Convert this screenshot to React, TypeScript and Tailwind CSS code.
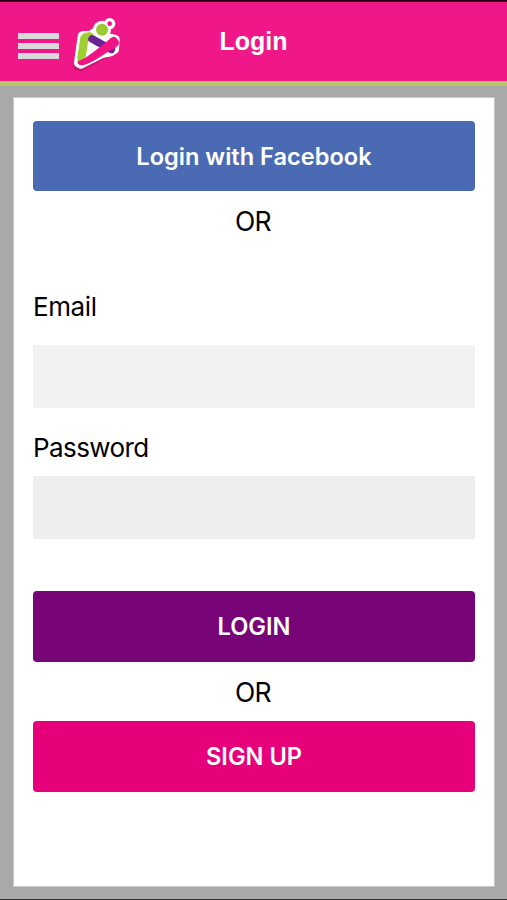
import type { ReactNode } from "react";

function Logo() {
  return (
    <svg viewBox="0 0 180 198" className="h-[66px] w-[60px] shrink-0" fill="none" strokeLinecap="round" strokeLinejoin="round">
      <g transform="translate(-1 6)" opacity="0.4" stroke="#8f1058" fill="#8f1058">
        <path d="M38 160 L50 79 L72 78 L118 88 L144 90 L142 114 L106 130 L46 162 Z" strokeWidth="30" />
      </g>
      <path d="M39 158 L50 79 L74 77 L104 58 L120 84 L146 89 L144 118 L134 124 L108 129 L44 161 Z" fill="#fff" stroke="#fff" strokeWidth="30" />
      <circle cx="108" cy="59" r="27" fill="#fff" />
      <circle cx="131" cy="41" r="17" fill="#fff" />
      <path d="M46 145 L55 86 Q58 79 71 79" stroke="#a0cf32" strokeWidth="25" />
      <path d="M78 87 L108 103 L136 118" stroke="#6d2396" strokeWidth="23" />
      <path d="M70 95 L100 114 L66 140 Z" fill="#fff" />
      <path d="M37 156 Q60 148 80 131 L116 103 L136 86 Q146 78 151 88 Q161 97 153 106 Q144 117 132 119 L102 138 Q70 159 50 163 Q38 165 37 156 Z" fill="#f01486" stroke="#f01486" strokeWidth="5" />
      <circle cx="108" cy="59" r="18" fill="#9cca35" />
      <circle cx="131" cy="41" r="7" fill="#f01486" />
    </svg>
  );
}

function Header() {
  return (
    <header className="relative flex h-[86px] items-start border-t-2 border-b-[5px] border-t-[#300018] border-b-[#b5c766] bg-[#f01788] pt-2">
      <button type="button" aria-label="Menu" className="mt-[23px] ml-[18px] flex w-[41px] flex-col gap-[4px]">
        <span className="h-[6px] bg-[#d9d9d9]" />
        <span className="h-[6px] bg-[#d9d9d9]" />
        <span className="h-[6px] bg-[#d9d9d9]" />
      </button>
      <div className="ml-[7px]">
        <Logo />
      </div>
      <h1 className="absolute inset-x-0 top-[24px] text-center font-['Liberation_Sans',sans-serif] text-[25px] leading-[30px] font-bold text-white">
        Login
      </h1>
    </header>
  );
}

function Button({ className, children }: { className: string; children: ReactNode }) {
  return (
    <button type="button" className={`block w-full rounded-[4px] pt-px text-[23.6px] font-semibold text-white ${className}`}>
      {children}
    </button>
  );
}

function Or() {
  return <p className="h-[59px] pr-[2px] text-center text-[26.5px] leading-[60px] tracking-[-0.6px]">OR</p>;
}

export default function App() {
  return (
    <div className="flex h-[900px] w-[507px] flex-col border-b border-[#333] bg-[#a9a9a9] font-[Inter,sans-serif] text-black">
      <Header />
      <main className="mx-[13px] mt-[11px] h-[790px] w-[482px] border border-[#c8c8c8] bg-white px-[19px] pt-[23px]">
        <Button className="h-[70px] bg-[#4a6bb3]">Login with Facebook</Button>
        <Or />
        <form onSubmit={(e) => e.preventDefault()}>
          <label htmlFor="email" className="mt-[38px] block text-[26px] leading-[37px] tracking-[-0.4px]">
            Email
          </label>
          <input id="email" type="email" className="mt-[20px] block h-[63px] w-full bg-[#f1f1f1] px-3 text-2xl outline-none" />
          <label htmlFor="password" className="mt-[21px] block text-[26px] leading-[37px] tracking-[-0.6px]">
            Password
          </label>
          <input id="password" type="password" className="mt-[10px] mb-[52px] block h-[63px] w-full bg-[#eeeeee] px-3 text-2xl outline-none" />
          <Button className="h-[71px] bg-[#780578]">LOGIN</Button>
        </form>
        <Or />
        <Button className="h-[71px] bg-[#e60079]">SIGN UP</Button>
      </main>
    </div>
  );
}
